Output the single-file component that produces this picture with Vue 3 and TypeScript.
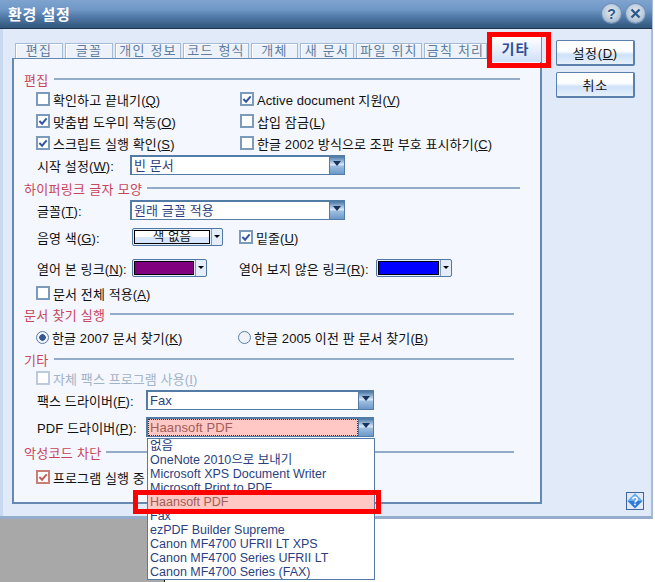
<script setup lang="ts">
const tabs: { name: string; width: number }[] = [
  { name: '편집', width: 48 },
  { name: '글꼴', width: 48 },
  { name: '개인 정보', width: 66 },
  { name: '코드 형식', width: 66 },
  { name: '개체', width: 47 },
  { name: '새 문서', width: 54 },
  { name: '파일 위치', width: 66 },
  { name: '금칙 처리', width: 63 },
]
const printers: string[] = [
  '없음',
  'OneNote 2010으로 보내기',
  'Microsoft XPS Document Writer',
  'Microsoft Print to PDF',
  'Haansoft PDF',
  'Fax',
  'ezPDF Builder Supreme',
  'Canon MF4700 UFRII LT XPS',
  'Canon MF4700 Series UFRII LT',
  'Canon MF4700 Series (FAX)',
]
</script>

<template>
  <div class="page">
    <div class="window">
      <header class="titlebar">
        <span class="title">환경 설정</span>
        <span class="round"><b>?</b></span>
        <span class="round">
          <svg width="11" height="11" viewBox="0 0 11 11"><path d="M1.5 1.5l8 8M9.5 1.5l-8 8" stroke="#2f5a8c" stroke-width="2.4" fill="none" /></svg>
        </span>
      </header>

      <div class="body">
        <div class="main">
          <nav class="tabs">
            <span v-for="t in tabs" :key="t.name" class="tab" :style="{ width: t.width + 'px' }">{{ t.name }}</span>
            <span class="tab active">기타</span>
          </nav>

          <div class="panel">
            <section class="sec s1">
              <h3 class="head"><span>편집</span></h3>
              <div class="row two">
                <label class="chk"><i class="box"></i><span>확인하고 끝내기(<u>Q</u>)</span></label>
                <label class="chk"><i class="box"><svg viewBox="0 0 11 11"><path d="M1.5 5.5l3 3 5-6" /></svg></i><span>Active document 지원(<u>V</u>)</span></label>
              </div>
              <div class="row two">
                <label class="chk"><i class="box"><svg viewBox="0 0 11 11"><path d="M1.5 5.5l3 3 5-6" /></svg></i><span>맞춤법 도우미 작동(<u>O</u>)</span></label>
                <label class="chk"><i class="box"></i><span>삽입 잠금(<u>L</u>)</span></label>
              </div>
              <div class="row two">
                <label class="chk"><i class="box"><svg viewBox="0 0 11 11"><path d="M1.5 5.5l3 3 5-6" /></svg></i><span>스크립트 실행 확인(<u>S</u>)</span></label>
                <label class="chk"><i class="box"></i><span>한글 2002 방식으로 조판 부호 표시하기(<u>C</u>)</span></label>
              </div>
              <div class="row field">
                <span class="lab">시작 설정(<u>W</u>):</span>
                <div class="combo wide"><span class="value">빈 문서</span><span class="arrow"></span></div>
              </div>
            </section>

            <section class="sec s2">
              <h3 class="head"><span>하이퍼링크 글자 모양</span></h3>
              <div class="row field">
                <span class="lab">글꼴(<u>T</u>):</span>
                <div class="combo wide"><span class="value">원래 글꼴 적용</span><span class="arrow"></span></div>
              </div>
              <div class="row field tall">
                <span class="lab">음영 색(<u>G</u>):</span>
                <div class="color w91"><span class="swatch none">색 없음</span><span class="mini"></span></div>
                <label class="chk under"><i class="box"><svg viewBox="0 0 11 11"><path d="M1.5 5.5l3 3 5-6" /></svg></i><span>밑줄(<u>U</u>)</span></label>
              </div>
              <div class="row field tall2">
                <span class="lab">열어 본 링크(<u>N</u>):</span>
                <div class="color w75"><span class="swatch purple"></span><span class="mini"></span></div>
                <span class="lab unvisited">열어 보지 않은 링크(<u>R</u>):</span>
                <div class="color w76"><span class="swatch blue"></span><span class="mini"></span></div>
              </div>
              <div class="row">
                <label class="chk"><i class="box"></i><span>문서 전체 적용(<u>A</u>)</span></label>
              </div>
            </section>

            <section class="sec s3">
              <h3 class="head"><span>문서 찾기 실행</span></h3>
              <div class="row two radios">
                <label class="chk"><i class="radio on"></i><span>한글 2007 문서 찾기(<u>K</u>)</span></label>
                <label class="chk"><i class="radio"></i><span>한글 2005 이전 판 문서 찾기(<u>B</u>)</span></label>
              </div>
            </section>

            <section class="sec s4">
              <h3 class="head"><span>기타</span></h3>
              <div class="row">
                <label class="chk disabled"><i class="box"></i><span>자체 팩스 프로그램 사용(<u>I</u>)</span></label>
              </div>
              <div class="row field">
                <span class="lab long">팩스 드라이버(<u>F</u>):</span>
                <div class="combo driver"><span class="value">Fax</span><span class="arrow"></span></div>
              </div>
              <div class="row field pdf">
                <span class="lab long">PDF 드라이버(<u>P</u>):</span>
                <div class="combo driver"><span class="value selected">Haansoft PDF</span><span class="arrow"></span></div>
              </div>
            </section>

            <section class="sec s5">
              <h3 class="head"><span>악성코드 차단</span></h3>
              <div class="row">
                <label class="chk danger"><i class="box"><svg viewBox="0 0 11 11"><path d="M1.5 5.5l3 3 5-6" /></svg></i><span>프로그램 실행 중</span></label>
              </div>
            </section>
          </div>
        </div>

        <aside class="side">
          <button class="btn">설정(<u>D</u>)</button>
          <button class="btn">취소</button>
          <span class="help">
            <svg width="18" height="18" viewBox="0 0 18 18">
              <rect x="0.5" y="0.5" width="17" height="17" fill="#dfe9f7" stroke="#3f659c" />
              <path d="M9 1.5L16.5 9 9 16.5 1.5 9z" fill="#2f7ad6" />
              <path d="M9 1.5L16.5 9H1.5z" fill="#6aaef0" />
              <path d="M6.8 7.2a2.2 2 0 1 1 3.2 1.8c-.7.4-1 .8-1 1.6" stroke="#fff" stroke-width="1.5" fill="none" />
              <rect x="8.2" y="11.6" width="1.6" height="1.6" fill="#fff" />
            </svg>
          </span>
        </aside>
      </div>

      <ul class="list">
        <li v-for="p in printers" :key="p" :class="{ picked: p === 'Haansoft PDF' }">{{ p }}</li>
      </ul>
      <div class="mark mark-tab"></div>
      <div class="mark mark-item"></div>
    </div>
    <div class="backdrop"></div>
  </div>
</template>

<style>
html, body { margin: 0; background: #fff; }
</style>

<style scoped>
.page {
  width: 655px;
  height: 582px;
  overflow: hidden;
  font: 13px "Liberation Sans", "Noto Sans CJK KR", sans-serif;
  color: #111;
}
.window {
  position: relative;
  width: 653px;
  height: 519px;
  box-sizing: border-box;
  background: #e0eaf8;
  border-bottom: 3px solid #95acca;
  border-right: 2px solid #a9bcd6;
}
.titlebar {
  display: flex;
  align-items: center;
  gap: 5px;
  height: 29px;
  box-sizing: border-box;
  margin-right: -1px;
  padding: 0 7px 1px 8px;
  background: linear-gradient(#7fa3cf 0, #6f97c6 35%, #527aa9 60%, #33597f 96%);
  border-bottom: 1px solid #22344c;
}
.title {
  flex: 1;
  font-size: 15px;
  font-weight: 700;
  letter-spacing: 0.6px;
  color: #fff;
}
.round {
  display: flex;
  align-items: center;
  justify-content: center;
  width: 19px;
  height: 19px;
  border-radius: 50%;
  background: radial-gradient(circle at 50% 40%, #e6ecf3 0, #b7c7d8 60%, #7f9cba 100%);
  box-shadow: 0 0 0 1px #6d8fb6;
  color: #2f5a8c;
  font-size: 14px;
}
.body {
  display: flex;
  height: 487px;
  box-sizing: border-box;
  border-left: 3px solid #c9d9ef;
  padding-left: 9px;
}
.main { width: 531px; padding-top: 14px; }
.tabs { display: flex; gap: 2px; height: 15px; padding-left: 3px; }
.tab {
  box-sizing: border-box;
  height: 15px;
  text-align: center;
  line-height: 13px;
  font-size: 13px;
  letter-spacing: 1.2px;
  color: #5d7c9f;
  background: #edf2fa;
  border: 1px solid #a5bbd4;
  border-bottom: 0;
  box-shadow: inset 1px 1px 0 #fff;
  white-space: nowrap;
}
.tab.active {
  position: relative;
  z-index: 1;
  width: 53px;
  height: 26px;
  margin-top: -7px;
  line-height: 24px;
  font-weight: 700;
  font-size: 14px;
  color: #2d4e98;
  background: linear-gradient(#fff, #f3f7fe 25%, #cfe0f8);
  border-color: #6f92ba;
}
.panel {
  height: 446px;
  box-sizing: border-box;
  padding-top: 13px;
  background: #f4f7fd;
  border: 2px solid #6689af;
  border-width: 1px 2px 2px 2px;
}
.head {
  display: flex;
  align-items: center;
  gap: 5px;
  height: 14px;
  margin: 0 20px 0 10px;
  font: inherit;
  letter-spacing: 0.3px;
  color: #c9455c;
}
.head::after {
  content: "";
  flex: 1;
  height: 2px;
  background: #93acca;
}
.s1 .head { margin-bottom: 2px; }
.s2 { margin-top: 5px; }
.s2 .head { margin-bottom: 4px; }
.s3 { margin-top: 3px; }
.s3 .head { margin-bottom: 5px; margin-right: 26px; }
.s4 { margin-top: 4px; }
.s4 .head { margin-bottom: 1px; margin-right: 26px; }
.s5 { margin-top: 7px; }
.s5 .head { margin-bottom: 7px; margin-right: 26px; }
.row {
  display: flex;
  align-items: center;
  height: 22px;
  padding-left: 22px;
  white-space: nowrap;
  letter-spacing: 0.1px;
}
.two .chk:first-child { width: 204px; }
.radios .chk:first-child { width: 202px; }
.chk { display: flex; align-items: center; gap: 3px; }
.box {
  display: block;
  flex: none;
  width: 14px;
  height: 14px;
  box-sizing: border-box;
  background: #fff;
  border: 2px solid #7c9abc;
}
.box svg {
  display: block;
  width: 10px;
  height: 10px;
  fill: none;
  stroke: #34589f;
  stroke-width: 2.2;
}
.radio {
  display: block;
  flex: none;
  width: 13px;
  height: 13px;
  box-sizing: border-box;
  border-radius: 50%;
  border: 1px solid #5a7ca5;
  background: #eef3fa;
}
.radio.on { background: radial-gradient(circle, #37598f 0 3px, #eef3fa 3.5px); }
.disabled { color: #a3b3c8; }
.disabled .box { border-color: #bccadc; }
.danger .box { border-color: #c97f76; }
.danger .box svg { stroke: #c0605a; }
.field { height: 22px; }
.lab { width: 94px; flex: none; padding-left: 1px; box-sizing: border-box; }
.lab.long { width: 110px; }
.combo {
  display: flex;
  height: 20px;
  box-sizing: border-box;
  background: #fff;
  border: 1px solid #527ba6;
}
.combo.wide { width: 215px; border-width: 2px 1px 1px 2px; }
.combo.driver { width: 228px; border-width: 2px 1px 1px 2px; }
.value {
  flex: 1;
  padding-left: 2px;
  line-height: 17px;
  color: #2b3f80;
}
.selected {
  color: #a25d58;
  background: #ffc8c4;
  outline: 1px dotted #333;
  outline-offset: -1px;
}
.arrow {
  position: relative;
  width: 14px;
  flex: none;
  border-left: 1px solid #527ba6;
  background: linear-gradient(#4f7dad 0, #d8e6f6 45%, #9dbde0 55%, #6c98c8 100%);
}
.arrow::after {
  content: "";
  position: absolute;
  left: 3px;
  top: 4px;
  border: 4px solid transparent;
  border-top: 5px solid #16345e;
  border-bottom: 0;
}
.tall { height: 28px; margin-top: 2px; }
.tall .lab, .tall2 .lab { width: 96px; }
.tall2 { height: 28px; margin-top: 3px; }
.color {
  display: flex;
  height: 18px;
  box-sizing: border-box;
  border: 1px solid #4f78a5;
  border-radius: 2px;
  background: #e4eefb;
}
.w91 { width: 91px; }
.w75 { width: 75px; }
.w76 { width: 76px; }
.swatch {
  flex: 1;
  margin: 1px 0 1px 1px;
  border: 1px solid #000;
  text-align: center;
  font-size: 12.5px;
  line-height: 13px;
}
.none { background: linear-gradient(#fff 50%, #d7e6fa 50%); }
.purple { background: #800080; }
.blue { background: #00f; }
.mini {
  position: relative;
  width: 10px;
  flex: none;
  margin-left: 1px;
  border-left: 1px solid #7c9abc;
}
.mini::after {
  content: "";
  position: absolute;
  left: 2px;
  top: 6px;
  border: 3px solid transparent;
  border-top: 3px solid #000;
  border-bottom: 0;
}
.under { margin-left: 16px; }
.tall2 .unvisited { width: 137px; margin-left: 32px; padding-left: 0; }
.pdf { margin-top: 5px; }
.side {
  display: flex;
  flex-direction: column;
  align-items: flex-start;
  width: 95px;
  margin-left: 14px;
  padding-top: 11px;
  box-sizing: border-box;
}
.btn {
  width: 79px;
  height: 26px;
  margin-bottom: 6px;
  padding: 0;
  font: inherit;
  letter-spacing: 0.7px;
  color: #111;
  border: 1px solid #5a80ad;
  border-width: 1px 2px 2px 1px;
  border-radius: 2px;
  background: linear-gradient(#fff 0, #fafcff 45%, #cfe1f9 60%, #e6f0fc 100%);
}
.help { margin: auto 0 6px 70px; display: block; height: 18px; }
.help svg { display: block; }
.list {
  position: absolute;
  left: 147px;
  top: 438px;
  width: 228px;
  height: 142px;
  box-sizing: border-box;
  margin: 0;
  padding: 0;
  list-style: none;
  background: #fff;
  border: 1px solid #527ba6;
  color: #2b3f80;
  font-size: 12.5px;
  z-index: 2;
}
.list li {
  height: 14px;
  line-height: 14px;
  padding-left: 2px;
  white-space: nowrap;
}
.list li.picked { color: #a25d58; background: #ffc8c4; }
.mark {
  position: absolute;
  box-sizing: border-box;
  border: 5px solid #f00;
  z-index: 3;
}
.mark-tab { left: 487px; top: 32px; width: 64px; height: 36px; }
.mark-item { left: 133px; top: 490px; width: 248px; height: 24px; }
.backdrop {
  width: 165px;
  height: 63px;
  box-sizing: border-box;
  background: #a8a8a8;
  border-right: 1px solid #111;
}
</style>
